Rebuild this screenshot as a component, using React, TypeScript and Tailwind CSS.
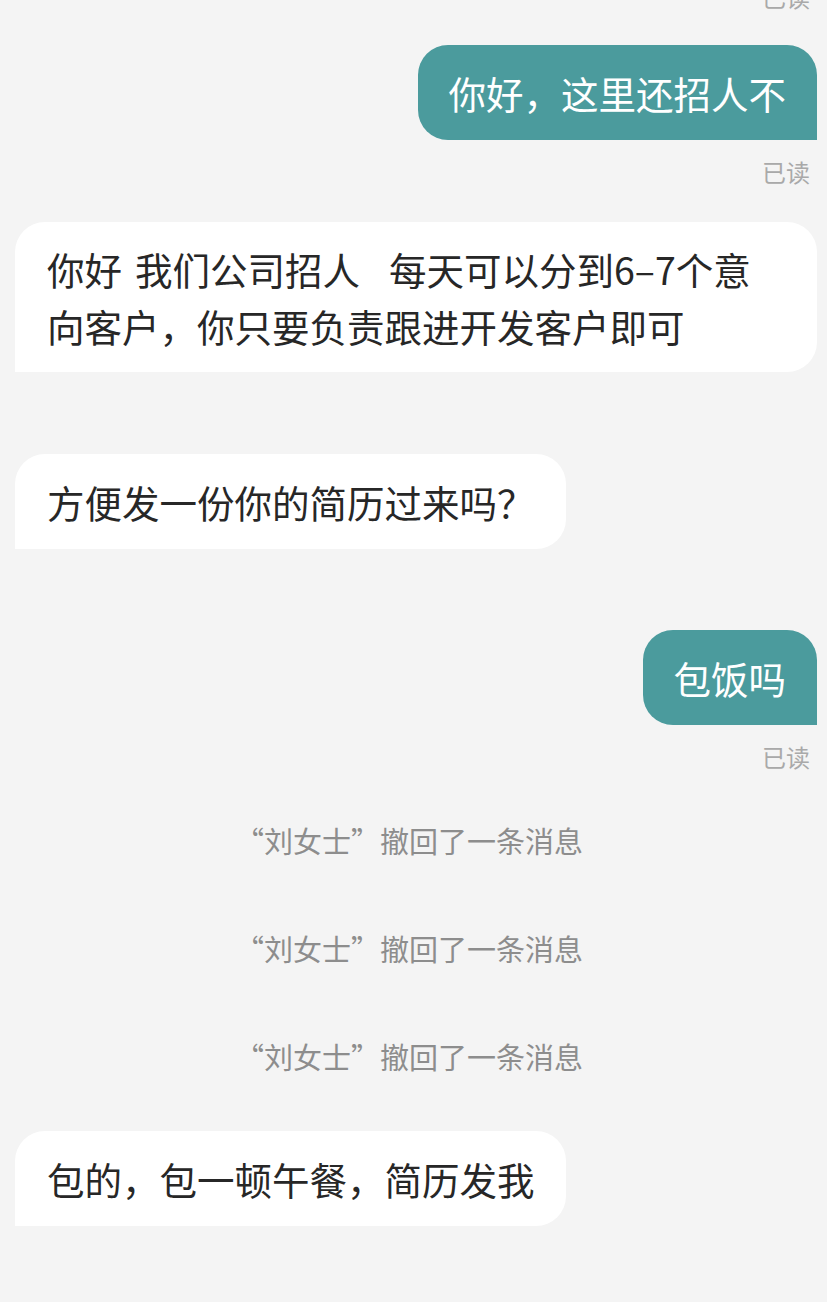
import React from 'react';

const font = { fontFamily: '"Noto Sans CJK SC", "Noto Sans", sans-serif' };

function ReadTag({ className = '' }: { className?: string }) {
    return (
        <div className={`flex justify-end pr-[7px] h-[30px] leading-[30px] text-[24px] text-[#a9a9a9] ${className}`}>
            已读
        </div>
    );
}

function Mine({ text, className = '' }: { text: string; className?: string }) {
    return (
        <div className={`flex justify-end ${className}`}>
            <div className='bg-[#4b9b9d] text-white text-[37.5px] leading-[57px] py-[19px] px-[31px] rounded-[30px] rounded-br-none'>
                {text}
            </div>
        </div>
    );
}

function Theirs({ children, className = '' }: { children: React.ReactNode; className?: string }) {
    return (
        <div className={`flex justify-start ${className}`}>
            <div className='bg-white text-[#272727] text-[37.5px] leading-[57px] py-[19px] pl-[32px] pr-[31px] rounded-[30px] rounded-bl-none'>
                {children}
            </div>
        </div>
    );
}

function Recalled({ className = '' }: { className?: string }) {
    return (
        <div className={`flex justify-center pr-[14px] h-[40px] leading-[40px] text-[29px] text-[#8d8d8d] ${className}`}>
            “刘女士”撤回了一条消息
        </div>
    );
}

export default function App() {
    return (
        <div className='w-[827px] h-[1302px] overflow-hidden bg-[#f4f4f4]' style={font}>
            <div className='flex flex-col pl-[15px] pr-[10px]'>
                <ReadTag className='-mt-[18px]' />
                <Mine text='你好，这里还招人不' className='mt-[33px]' />
                <ReadTag className='mt-[17px]' />

                <div className='mt-[35px] bg-white text-[#272727] text-[37.5px] leading-[57px] py-[18px] pl-[32px] rounded-[30px] rounded-bl-none'>
                    <div className='flex'>
                        <span>你好</span>
                        <span className='w-[13px]' />
                        <span>我们公司招人</span>
                        <span className='w-[29px]' />
                        <span>每天可以分到6–7个意</span>
                    </div>
                    <div>向客户，你只要负责跟进开发客户即可</div>
                </div>

                <Theirs className='mt-[82px]'>方便发一份你的简历过来吗？</Theirs>

                <Mine text='包饭吗' className='mt-[81px]' />
                <ReadTag className='mt-[17px]' />

                <Recalled className='mt-[48px]' />
                <Recalled className='mt-[68px]' />
                <Recalled className='mt-[68px]' />

                <Theirs className='mt-[55px]'>包的，包一顿午餐，简历发我</Theirs>
            </div>
        </div>
    );
}
